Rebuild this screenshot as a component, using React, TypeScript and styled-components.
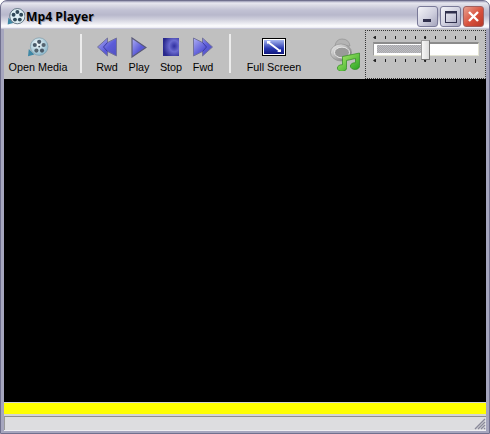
import styled, { createGlobalStyle } from "styled-components";

const GlobalStyle = createGlobalStyle`
  html, body {
    margin: 0;
    padding: 0;
    background: #fff;
  }
`;

const Window = styled.div`
  width: 490px;
  height: 434px;
  box-sizing: border-box;
  display: flex;
  flex-direction: column;
  border: 1px solid #70708e;
  border-radius: 7px 7px 0 0;
  overflow: hidden;
  background: #a6a6be;
  font-family: "Liberation Sans", Arial, sans-serif;
`;

const TitleBar = styled.div`
  height: 28px;
  flex: none;
  box-sizing: border-box;
  display: flex;
  align-items: center;
  padding: 3px 5px 0 6px;
  background: linear-gradient(
    to bottom,
    #9a9ab4 0,
    #e8e8f0 2px,
    #dcdce6 4px,
    #c2c2d4 9px,
    #b8b8cc 14px,
    #d4d4e0 19px,
    #fcfcfe 25px,
    #e8e8f0 27px,
    #a8a8c0 28px
  );
`;

const TitleText = styled.span`
  margin-left: 1px;
  font-family: "Open Sans", sans-serif;
  font-weight: 700;
  font-size: 12.2px;
  color: #000;
  text-shadow: 1px 1px 0 #9a9ab0;
  flex: 1;
`;

const CaptionButton = styled.div<{ $close?: boolean }>`
  width: 21px;
  height: 21px;
  box-sizing: border-box;
  margin-left: 2px;
  border-radius: 3px;
  border: 1px solid ${(p) => (p.$close ? "#a06060" : "#7a7a98")};
  background: ${(p) =>
    p.$close
      ? "linear-gradient(135deg, #e8a090, #d8503c 55%, #b83828)"
      : "linear-gradient(135deg, #f4f4f8, #cfcfde 55%, #a4a4bc)"};
  display: flex;
  align-items: center;
  justify-content: center;
`;

const Body = styled.div`
  flex: 1;
  display: flex;
  flex-direction: column;
  margin: 0 3px 2px 3px;
  min-height: 0;
  background: #d4d4d4;
  border-bottom: 1px solid #eeeef2;
`;

const Toolbar = styled.div`
  height: 50px;
  flex: none;
  display: flex;
  align-items: stretch;
  background: #c0c0c0;
`;

const ToolButton = styled.div<{ $width: number }>`
  width: ${(p) => p.$width}px;
  flex: none;
  display: flex;
  flex-direction: column;
  align-items: center;
  justify-content: flex-start;
  padding-top: 5px;
  box-sizing: border-box;
`;

const IconSlot = styled.div`
  height: 26px;
  display: flex;
  align-items: center;
  justify-content: center;
`;

const Label = styled.span`
  font-size: 10.8px;
  line-height: 14px;
  color: #000;
  white-space: nowrap;
`;

const Separator = styled.div<{ $left: number; $right: number }>`
  width: 2px;
  flex: none;
  margin: 5px ${(p) => p.$right}px 6px ${(p) => p.$left}px;
  background: #ececec;
`;

const SpeakerSlot = styled.div`
  flex: 1;
  display: flex;
  align-items: center;
  justify-content: flex-end;
  padding-right: 5px;
`;

const SliderPanel = styled.div`
  width: 121px;
  flex: none;
  box-sizing: border-box;
  border: 1px dotted #333;
  margin: 1px 0 0;
  padding: 5px 6px 0 7px;
  display: flex;
  flex-direction: column;
`;

const Track = styled.div`
  height: 14px;
  margin: 2px 0 3px;
  position: relative;
  box-sizing: border-box;
  padding: 1px 0 2px 3px;
  background: #fff;
  border-top: 2px solid #8c8c8c;
  border-left: 1px solid #9a9a9a;
  border-bottom: 1px solid #e4e4d4;
  border-right: 1px solid #e4e4d4;
`;

const TrackFill = styled.div`
  height: 100%;
  background: repeating-conic-gradient(#a8a8a8 0 25%, #bcbcc4 0 50%) 0 0 / 2px 2px;
`;

const Thumb = styled.div`
  position: absolute;
  left: 47px;
  top: -4px;
  width: 9px;
  height: 20px;
  box-sizing: border-box;
  background: linear-gradient(to right, #f6f6f6, #dcdcdc);
  border: 1px solid #9c9c9c;
  border-right-color: #777;
  border-bottom-color: #777;
`;

const Video = styled.div`
  flex: 1;
  background: #000;
`;

const Marquee = styled.div`
  height: 11px;
  flex: none;
  margin-top: 1px;
  background: #ffff00;
`;

const StatusBar = styled.div`
  height: 14px;
  flex: none;
  box-sizing: border-box;
  margin-top: 2px;
  position: relative;
  background: #dddde0;
  border-top: 1px solid #8f8f8f;
  border-left: 1px solid #9a9a9a;
`;

const Grip = styled.svg`
  position: absolute;
  right: 0;
  bottom: 0;
`;

function Ticks() {
  const xs = Array.from({ length: 11 }, (_, i) => 2 + i * 10);
  return (
    <svg width="106" height="4" style={{ display: "block" }}>
      {xs.map((x) => (
        <rect key={x} x={x} y="0" width="1" height={x === 102 ? 4 : 3} fill="#222" />
      ))}
      <path d="M0 1.5 L2 0 V3 Z M53.5 1.5 L51 0 V3 Z" fill="#222" />
    </svg>
  );
}

function ReelIcon() {
  return (
    <svg width="22" height="20" viewBox="1 0 27 25">
      <defs>
        <radialGradient id="reel" cx="40%" cy="35%" r="70%">
          <stop offset="0" stopColor="#f4fafc" />
          <stop offset="1" stopColor="#86b4c8" />
        </radialGradient>
      </defs>
      <path d="M3 15 L2 24 L10 22 Z" fill="#3f88a6" />
      <circle cx="16" cy="12" r="11" fill="url(#reel)" stroke="#7a98a8" strokeWidth="0.8" />
      <circle cx="16" cy="6" r="2.6" fill="#4a5a68" />
      <circle cx="21.5" cy="10" r="2.6" fill="#55646f" />
      <circle cx="19.5" cy="17" r="2.6" fill="#4a5a68" />
      <circle cx="12.5" cy="17" r="2.6" fill="#55646f" />
      <circle cx="10.5" cy="10" r="2.6" fill="#4a5a68" />
      <circle cx="16" cy="12" r="1.2" fill="#3d4a55" />
    </svg>
  );
}

function ArrowDefs({ id }: { id: string }) {
  return (
    <defs>
      <linearGradient id={id} x1="0" y1="0" x2="1" y2="1">
        <stop offset="0" stopColor="#b0b0f4" />
        <stop offset="0.55" stopColor="#5c5cd8" />
        <stop offset="1" stopColor="#5050c0" />
      </linearGradient>
    </defs>
  );
}

function RwdIcon() {
  return (
    <svg width="20" height="20" viewBox="0 0 20 20">
      <ArrowDefs id="rwd" />
      <path
        d="M0.5 10 L10.5 1 V5.5 L19.5 1 V19 L10.5 14.5 V19 Z"
        fill="url(#rwd)"
        stroke="#74749a"
      />
      <path d="M10.5 5.5 L6.5 10 L10.5 14.5" fill="none" stroke="#3c3ca0" />
    </svg>
  );
}

function PlayIcon() {
  return (
    <svg width="16" height="21" viewBox="0 0 16 21">
      <ArrowDefs id="play" />
      <path d="M1 1 L15 10.5 L1 20 Z" fill="url(#play)" stroke="#5a5a78" strokeWidth="1.2" />
    </svg>
  );
}

function StopIcon() {
  return (
    <svg width="16" height="18" viewBox="0 0 16 18">
      <defs>
        <radialGradient id="stop" cx="70%" cy="45%" r="70%">
          <stop offset="0" stopColor="#3030a0" />
          <stop offset="0.45" stopColor="#6a6ad0" />
          <stop offset="1" stopColor="#28288c" />
        </radialGradient>
      </defs>
      <rect width="16" height="18" fill="url(#stop)" />
    </svg>
  );
}

function FwdIcon() {
  return (
    <svg width="20" height="20" viewBox="0 0 20 20">
      <ArrowDefs id="fwd" />
      <path
        d="M19.5 10 L9.5 1 V5.5 L0.5 1 V19 L9.5 14.5 V19 Z"
        fill="url(#fwd)"
        stroke="#74749a"
      />
      <path d="M9.5 5.5 L13.5 10 L9.5 14.5" fill="none" stroke="#3c3ca0" />
    </svg>
  );
}

function ScreenIcon() {
  return (
    <svg width="24" height="18" viewBox="0 0 24 18">
      <defs>
        <linearGradient id="scr" x1="0" y1="0" x2="0" y2="1">
          <stop offset="0" stopColor="#a8b8f0" />
          <stop offset="0.6" stopColor="#2838b0" />
          <stop offset="1" stopColor="#101880" />
        </linearGradient>
      </defs>
      <rect x="0.5" y="0.5" width="23" height="17" fill="#fff" stroke="#000" />
      <rect x="2" y="2" width="20" height="14" fill="url(#scr)" />
      <path d="M6 4 L18 13" stroke="#fff" strokeWidth="2" />
      <path d="M5 3 H9 L5 6 Z M19 14 H15 L19 11 Z" fill="#fff" />
    </svg>
  );
}

function SpeakerIcon() {
  return (
    <svg width="30" height="33" viewBox="0 0 30 33">
      <defs>
        <linearGradient id="spk" x1="0" y1="0" x2="1" y2="1">
          <stop offset="0" stopColor="#f4f4f4" />
          <stop offset="1" stopColor="#6c6c6c" />
        </linearGradient>
        <linearGradient id="note" x1="0" y1="0" x2="1" y2="1">
          <stop offset="0" stopColor="#b8f070" />
          <stop offset="1" stopColor="#20a020" />
        </linearGradient>
      </defs>
      <path d="M5 8 Q6 1 12 1 Q19 1 20 8 Z" fill="#b4b4b4" stroke="#8c8c8c" strokeWidth="0.6" />
      <ellipse cx="11" cy="14.5" rx="10.5" ry="8.5" fill="url(#spk)" stroke="#8a8a8a" strokeWidth="0.6" />
      <ellipse cx="12" cy="14.5" rx="7.5" ry="5.4" fill="#9a9a9a" stroke="#ececec" />
      <path
        d="M12.5 18.5 L29.5 15 V27.5 A4.6 3.4 0 1 1 25.5 24.7 V20.5 L16.5 22.5 V29.5 A4.6 3.4 0 1 1 12.5 26.7 Z"
        fill="url(#note)"
        stroke="#2e8a20"
        strokeWidth="0.7"
      />
    </svg>
  );
}

function CaptionGlyph({ kind }: { kind: "min" | "max" | "close" }) {
  if (kind === "min") {
    return (
      <svg width="12" height="12" viewBox="0 0 12 12">
        <rect x="1" y="8" width="8" height="3" fill="#30304c" />
      </svg>
    );
  }
  if (kind === "max") {
    return (
      <svg width="12" height="12" viewBox="0 0 12 12">
        <rect x="0.5" y="0.5" width="11" height="11" fill="none" stroke="#30304c" />
        <rect x="0.5" y="0.5" width="11" height="2" fill="#30304c" />
      </svg>
    );
  }
  return (
    <svg width="13" height="13" viewBox="0 0 13 13">
      <path d="M2 2 L11 11 M11 2 L2 11" stroke="#fff" strokeWidth="2.4" />
    </svg>
  );
}

function TitleIcon() {
  return (
    <svg width="18" height="19" viewBox="1 0 26 25">
      <path d="M3 14 L2 24 L10 22 Z" fill="#3f88a6" />
      <circle cx="16" cy="12" r="11" fill="#dfeef4" stroke="#304858" />
      <circle cx="16" cy="6" r="2.8" fill="#304858" />
      <circle cx="21.5" cy="10" r="2.8" fill="#304858" />
      <circle cx="19.5" cy="17" r="2.8" fill="#304858" />
      <circle cx="12.5" cy="17" r="2.8" fill="#304858" />
      <circle cx="10.5" cy="10" r="2.8" fill="#304858" />
    </svg>
  );
}

export default function App() {
  return (
    <>
      <GlobalStyle />
      <Window>
        <TitleBar>
          <TitleIcon />
          <TitleText>Mp4 Player</TitleText>
          <CaptionButton>
            <CaptionGlyph kind="min" />
          </CaptionButton>
          <CaptionButton>
            <CaptionGlyph kind="max" />
          </CaptionButton>
          <CaptionButton $close>
            <CaptionGlyph kind="close" />
          </CaptionButton>
        </TitleBar>
        <Body>
          <Toolbar>
            <ToolButton $width={68}>
              <IconSlot>
                <ReelIcon />
              </IconSlot>
              <Label>Open Media</Label>
            </ToolButton>
            <Separator $left={8} $right={9} />
            <ToolButton $width={32}>
              <IconSlot>
                <RwdIcon />
              </IconSlot>
              <Label>Rwd</Label>
            </ToolButton>
            <ToolButton $width={32}>
              <IconSlot>
                <PlayIcon />
              </IconSlot>
              <Label>Play</Label>
            </ToolButton>
            <ToolButton $width={32}>
              <IconSlot>
                <StopIcon />
              </IconSlot>
              <Label>Stop</Label>
            </ToolButton>
            <ToolButton $width={32}>
              <IconSlot>
                <FwdIcon />
              </IconSlot>
              <Label>Fwd</Label>
            </ToolButton>
            <Separator $left={10} $right={8} />
            <ToolButton $width={70}>
              <IconSlot>
                <ScreenIcon />
              </IconSlot>
              <Label>Full Screen</Label>
            </ToolButton>
            <SpeakerSlot>
              <SpeakerIcon />
            </SpeakerSlot>
            <SliderPanel>
              <Ticks />
              <Track>
                <TrackFill style={{ width: 44 }} />
                <Thumb />
              </Track>
              <Ticks />
            </SliderPanel>
          </Toolbar>
          <Video />
          <Marquee />
          <StatusBar>
            <Grip width="12" height="12" viewBox="0 0 12 12">
              <path d="M11 1 L1 11 M11 4 L4 11 M11 7 L7 11 M11 10 L10 11" stroke="#8a8a9a" strokeWidth="1.4" />
            </Grip>
          </StatusBar>
        </Body>
      </Window>
    </>
  );
}
